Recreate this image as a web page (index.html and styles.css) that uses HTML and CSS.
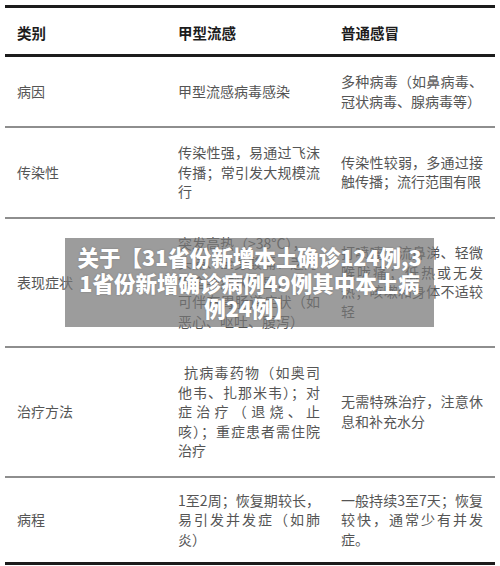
FILE: index.html
```html
<!DOCTYPE html>
<html lang="zh-CN">
<head>
<meta charset="utf-8">
<title>甲型流感与普通感冒</title>
<link rel="stylesheet" href="styles.css">
</head>
<body>
<div class="sheet">
  <div class="row head">
    <div class="c1">类别</div>
    <div class="c2">甲型流感</div>
    <div class="c3">普通感冒</div>
  </div>
  <div class="row">
    <div class="c1">病因</div>
    <div class="c2">甲型流感病毒感染</div>
    <div class="c3">多种病毒（如鼻病毒、冠状病毒、腺病毒等）</div>
  </div>
  <div class="row">
    <div class="c1">传染性</div>
    <div class="c2">传染性强，易通过飞沫传播；常引发大规模流行</div>
    <div class="c3">传染性较弱，多通过接触传播；流行范围有限</div>
  </div>
  <div class="row">
    <div class="c1">表现症状</div>
    <div class="c2">突发高热（&gt;38°C），<br>头痛、全身酸痛、乏力<br>等全身症状明显；<br>可伴有胃肠道症状（如恶心、呕吐、腹泻）</div>
    <div class="c3">打喷嚏、流鼻涕、轻微喉咙痛；低热或无发热；咳嗽和身体不适较轻</div>
  </div>
  <div class="row">
    <div class="c1">治疗方法</div>
    <div class="c2 indent">抗病毒药物（如奥司他韦、扎那米韦）；对症治疗（退烧、止咳）；重症患者需住院治疗</div>
    <div class="c3">无需特殊治疗，注意休息和补充水分</div>
  </div>
  <div class="row last">
    <div class="c1">病程</div>
    <div class="c2">1至2周；恢复期较长，易引发并发症（如肺炎）</div>
    <div class="c3">一般持续3至7天；恢复较快，通常少有并发症。</div>
  </div>
  <div class="overlay">关于【31省份新增本土确诊124例,31省份新增确诊病例49例其中本土病例24例】</div>
</div>
</body>
</html>
```
FILE: styles.css
```css
html, body {
  margin: 0;
  padding: 0;
  background: #ffffff;
}
body {
  width: 500px;
  height: 566px;
  overflow: hidden;
  font-family: "Noto Sans CJK SC", "Noto Sans", sans-serif;
  color: #555555;
  font-size: 14px;
}
.sheet {
  position: relative;
  margin: 5px 5px 0 5px;
  border-top: 3px solid #1c1c1c;
}
.row {
  display: grid;
  grid-template-columns: 173px 163px 1fr;
  align-items: center;
  padding: 15px 0;
  line-height: 19.5px;
  border-bottom: 2px solid #8e8e8e;
}
.row.head {
  padding: 15px 0 11px 0;
  line-height: 20px;
  font-weight: 700;
  font-size: 14.5px;
  color: #1c1c1c;
  border-bottom: 3px solid #1c1c1c;
}
.row.last {
  padding: 13px 0;
  border-bottom: 3px solid #1c1c1c;
}
.c1 {
  padding-left: 12px;
}
.c2 {
  padding-right: 21px;
  text-align: justify;
}
.c3 {
  padding-right: 12px;
  text-align: justify;
}
.indent {
  text-indent: 6px;
}
.overlay {
  position: absolute;
  left: 60px;
  top: 230px;
  width: 369px;
  height: 89px;
  box-sizing: border-box;
  padding: 6px 12px;
  background: rgba(118, 118, 118, 0.72);
  color: #ffffff;
  font-weight: 900;
  font-size: 21.5px;
  line-height: 25.5px;
  text-align: center;
  word-break: break-all;
  text-shadow: 0 0 2px rgba(0, 0, 0, 0.25);
}
```
